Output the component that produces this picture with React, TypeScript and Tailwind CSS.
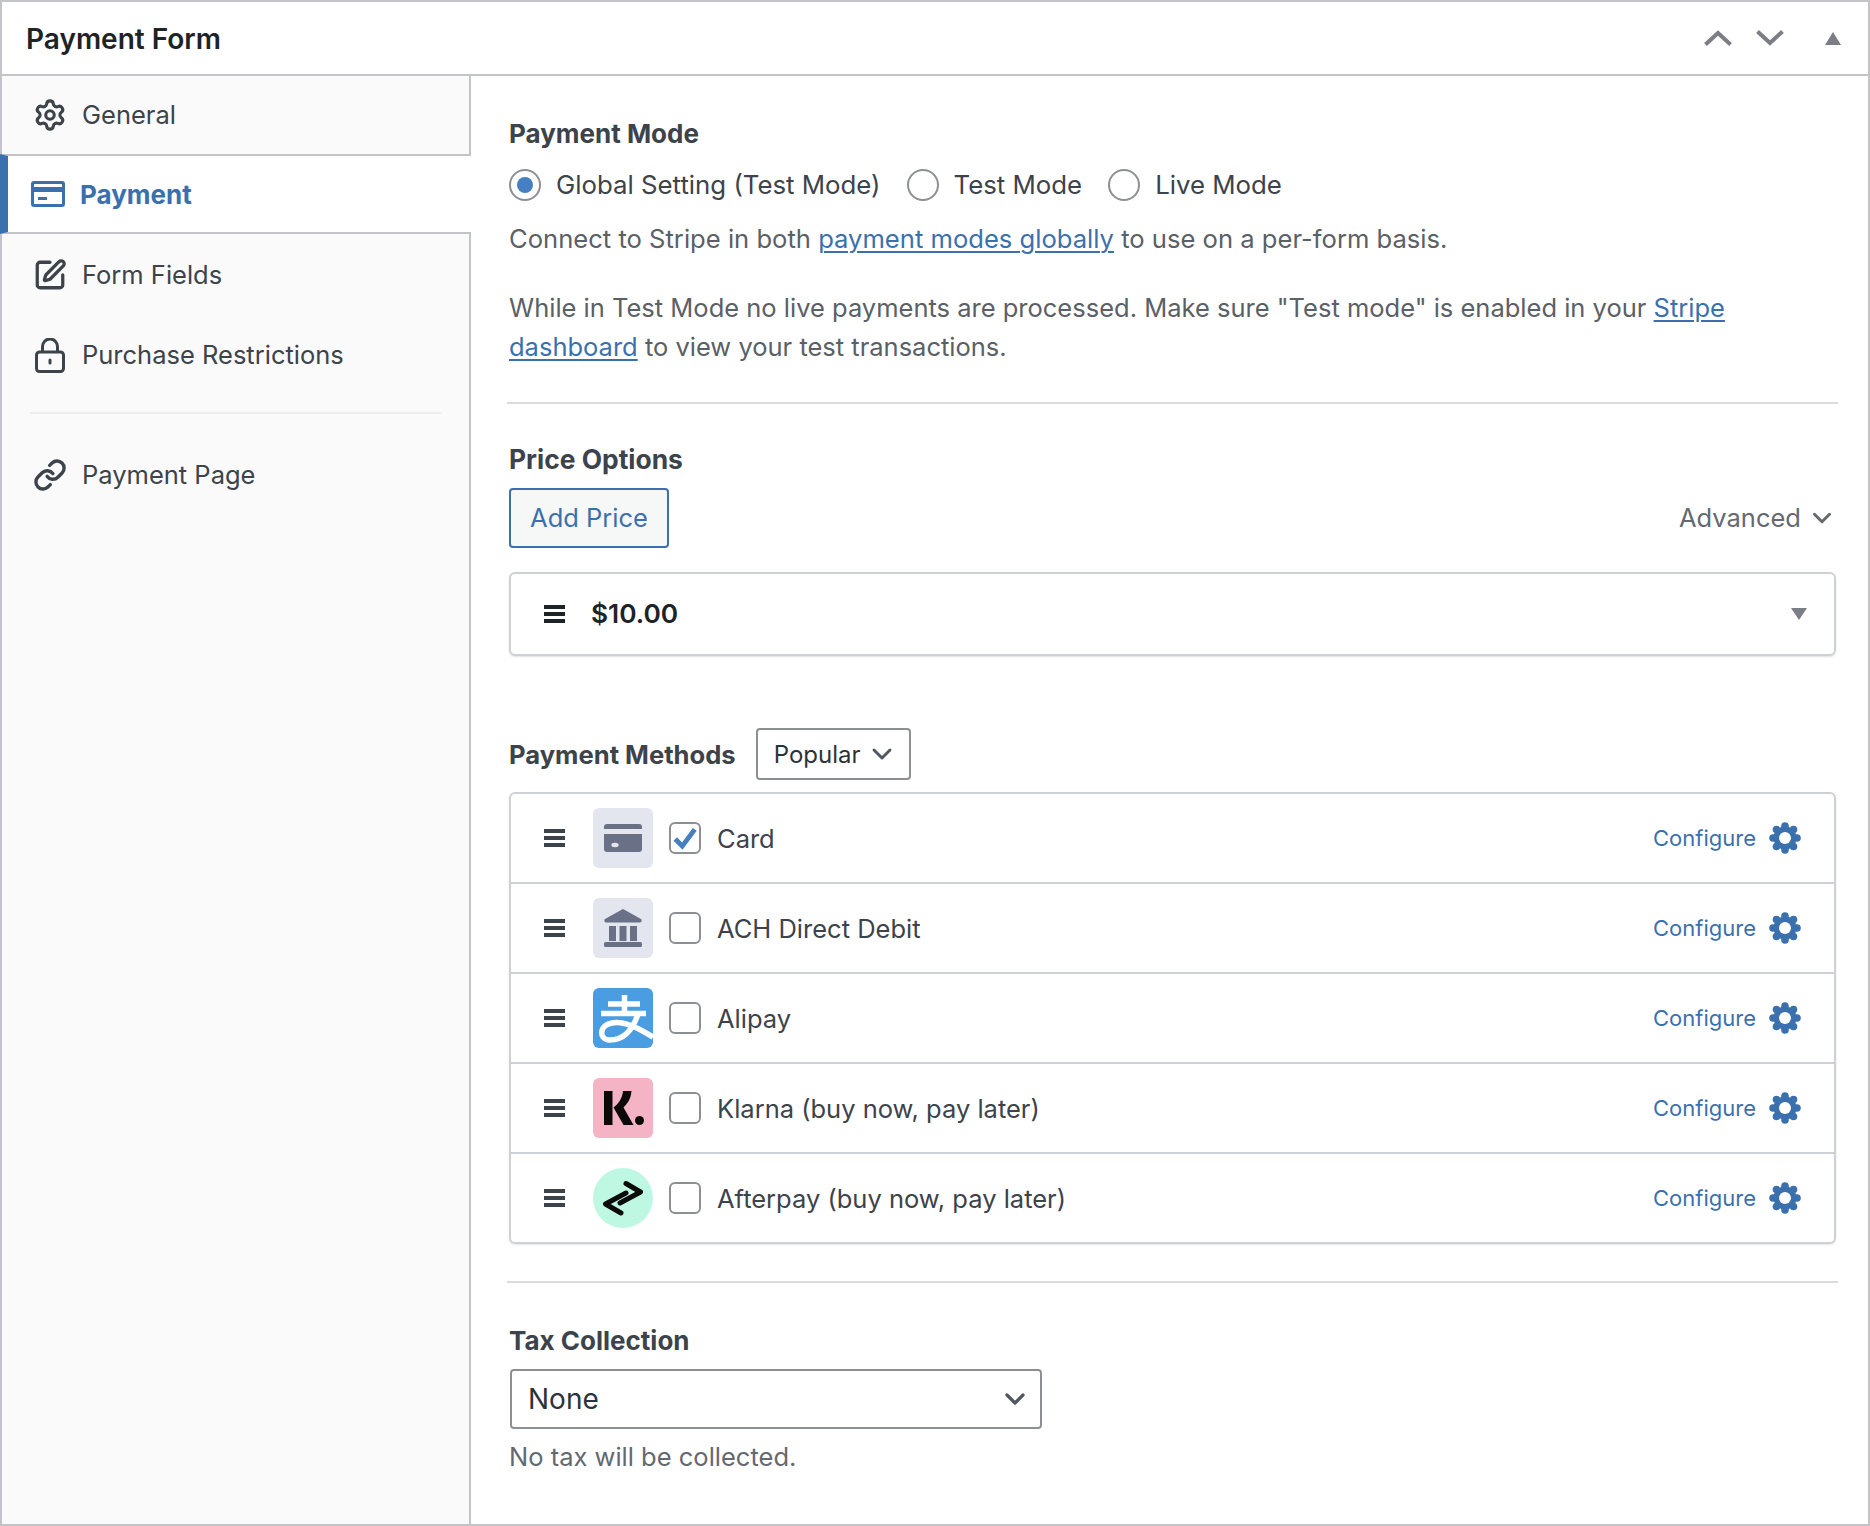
import React from 'react'
import { ChevronDown, Link, Settings, SquarePen } from 'lucide-react'

const FONT = "font-['Inter',sans-serif]"

const GripIcon = ({ className }: { className: string }) => (
  <div className={`flex w-[21px] shrink-0 flex-col gap-[3px] ${className}`}>
    <span className="h-[4px] w-full bg-current" />
    <span className="h-[4px] w-full bg-current" />
    <span className="h-[4px] w-full bg-current" />
  </div>
)

const GearFilled = () => (
  <svg viewBox="0 0 32 32" className="h-[32px] w-[32px]">
    <g fill="#3b70ae">
      <circle cx="16" cy="16" r="11.500" />
      <circle cx="16" cy="4" r="3.800" />
      <circle cx="16" cy="28" r="3.800" />
      <circle cx="4" cy="16" r="3.800" />
      <circle cx="28" cy="16" r="3.800" />
      <circle cx="7.500" cy="7.500" r="3.800" />
      <circle cx="24.500" cy="7.500" r="3.800" />
      <circle cx="7.500" cy="24.500" r="3.800" />
      <circle cx="24.500" cy="24.500" r="3.800" />
    </g>
    <circle cx="16" cy="16" r="6" fill="#fff" />
  </svg>
)

const CardLogo = () => (
  <div className="flex h-[60px] w-[60px] items-center justify-center rounded-[6px] bg-[#e3e6ee]">
    <svg viewBox="0 0 38 28" className="h-[28px] w-[38px]" fill="#6a7187">
      <path d="M0 3a3 3 0 0 1 3-3h32a3 3 0 0 1 3 3v2H0z" />
      <path d="M0 10h38v15a3 3 0 0 1-3 3H3a3 3 0 0 1-3-3z" />
      <ellipse cx="11" cy="21" rx="3.600" ry="2.200" fill="#e3e6ee" />
    </svg>
  </div>
)

const BankLogo = () => (
  <div className="flex h-[60px] w-[60px] items-center justify-center rounded-[6px] bg-[#e3e6ee]">
    <svg viewBox="0 0 38 38" className="h-[38px] w-[38px]" fill="#6a7187">
      <path d="M19 0 37 10c1 .6 1 3.500-1 3.500H2c-2 0-2-2.900-1-3.500z" />
      <rect x="5" y="17" width="7" height="15" />
      <rect x="15.500" y="17" width="7" height="15" />
      <rect x="26" y="17" width="7" height="15" />
      <rect x="0" y="33" width="38" height="5" rx="1.500" />
    </svg>
  </div>
)

const AlipayLogo = () => (
  <svg viewBox="0 0 60 60" className="h-[60px] w-[60px]">
    <rect width="60" height="60" rx="6" fill="#4a9de0" />
    <g stroke="#fff" strokeWidth="5.500" fill="none">
      <path d="M15 16H47" />
      <path d="M31.500 7V25" />
      <path d="M8 25.500H53" />
    </g>
    <path
      d="M45 26C41 38 33 52 17 52C10 52 8 47 9 43C10 37 18 34 25 34.500C36 35 48 42 60 49"
      stroke="#fff"
      strokeWidth="5.500"
      fill="none"
    />
  </svg>
)

const KlarnaLogo = () => (
  <svg viewBox="0 0 60 60" className="h-[60px] w-[60px]">
    <rect width="60" height="60" rx="6" fill="#f4b4c6" />
    <rect x="11" y="13" width="8.500" height="34" fill="#0c0a08" />
    <path d="M30 13h8.500c-.5 8-4.500 13-8 16.500L40.500 47H30.500L20.500 29.500C25.500 26 29.500 20 30 13z" fill="#0c0a08" />
    <circle cx="46.500" cy="42.500" r="4.500" fill="#0c0a08" />
  </svg>
)

const AfterpayLogo = () => (
  <svg viewBox="0 0 60 60" className="h-[60px] w-[60px]">
    <circle cx="30" cy="30" r="30" fill="#bff8e2" />
    <path
      d="M33 15.500 47.500 24 27 35M33 25 12.500 36 28 45"
      stroke="#0b0b0b"
      strokeWidth="5"
      strokeLinecap="round"
      strokeLinejoin="round"
      fill="none"
    />
  </svg>
)

const CardNavIcon = () => (
  <svg viewBox="0 0 34 26" className="h-[26px] w-[34px]" fill="#3b70ae">
    <path
      fillRule="evenodd"
      d="M3 0h28a3 3 0 0 1 3 3v20a3 3 0 0 1-3 3H3a3 3 0 0 1-3-3V3a3 3 0 0 1 3-3zm0 3v3h28V3zm0 8v12h28V11z"
    />
    <rect x="7" y="16" width="9" height="3" />
  </svg>
)

const LockIcon = () => (
  <svg viewBox="0 0 30 35" className="h-[35px] w-[30px]" fill="none" stroke="#3c434a" strokeWidth="3">
    <rect x="1.500" y="14" width="27" height="19.500" rx="3" />
    <path d="M7.500 14V8.500a7.500 7.500 0 0 1 15 0V14" />
    <path d="M15 22v3" strokeLinecap="round" />
  </svg>
)

const SideItem = ({ icon, label, height = 'h-[80px]' }: { icon: React.ReactNode; label: string; height?: string }) => (
  <div className={`flex items-center pl-[31px] text-[25.5px] leading-none text-[#3c434a] ${height}`}>
    <span className="flex w-[34px] justify-center">{icon}</span>
    <span className="ml-[15px]">{label}</span>
  </div>
)

const Radio = ({ label, checked }: { label: string; checked?: boolean }) => (
  <label className="flex items-center">
    <span className="flex h-[32px] w-[32px] items-center justify-center rounded-full border-2 border-[#8c8f94] bg-white">
      {checked && <span className="h-[16px] w-[16px] rounded-full bg-[#4680c2]" />}
    </span>
    <span className="ml-[15px] text-[25.8px] text-[#3c434a]">{label}</span>
  </label>
)

const methods = [
  { name: 'Card', logo: <CardLogo />, checked: true },
  { name: 'ACH Direct Debit', logo: <BankLogo /> },
  { name: 'Alipay', logo: <AlipayLogo /> },
  { name: 'Klarna (buy now, pay later)', logo: <KlarnaLogo /> },
  { name: 'Afterpay (buy now, pay later)', logo: <AfterpayLogo /> },
]

const MethodRow = ({ name, logo, checked, last }: { name: string; logo: React.ReactNode; checked?: boolean; last: boolean }) => (
  <div className={`flex items-center pl-[33px] pr-[33px] ${last ? 'h-[88px]' : 'h-[90px] border-b-2 border-[#cdd0d4]'}`}>
    <GripIcon className="text-[#3c434a]" />
    <div className="ml-[28px]">{logo}</div>
    <span className="ml-[16px] flex h-[32px] w-[32px] items-center justify-center rounded-[6px] border-2 border-[#8c8f94] bg-white">
      {checked && (
        <svg viewBox="0 0 24 24" className="h-[26px] w-[26px]" fill="none" stroke="#4680c2" strokeWidth="4.500">
          <path d="M3 13l6.500 6.500L21 4" />
        </svg>
      )}
    </span>
    <span className="ml-[16px] mt-[2px] text-[25.5px] leading-none text-[#3c434a]">{name}</span>
    <a className="ml-auto text-[22px] leading-none text-[#3b70ae]">Configure</a>
    <span className="ml-[13px]">
      <GearFilled />
    </span>
  </div>
)

export default function App() {
  return (
    <div className={`flex h-[1526px] w-[1870px] flex-col border-2 border-[#c3c4c7] bg-white ${FONT}`}>
      <div className="flex h-[74px] shrink-0 items-center border-b-2 border-[#c3c4c7] pl-[24px] pr-[27px]">
        <h2 className="mt-[2px] text-[28px] font-semibold leading-none text-[#1d2327]">Payment Form</h2>
        <div className="ml-auto flex items-center text-[#7c7e85]">
          <svg viewBox="0 0 28 16" className="h-[16px] w-[28px]" fill="none" stroke="currentColor" strokeWidth="4">
            <path d="M1.500 14.500 14 3l12.500 11.500" />
          </svg>
          <svg viewBox="0 0 28 16" className="ml-[24px] h-[16px] w-[28px]" fill="none" stroke="currentColor" strokeWidth="4">
            <path d="M1.500 1.500 14 13 26.500 1.500" />
          </svg>
          <span className="ml-[41px] h-0 w-0 border-x-[8px] border-b-[13px] border-x-transparent border-b-[#7c7e85]" />
        </div>
      </div>

      <div className="flex min-h-0 flex-1">
        <aside className="w-[469px] shrink-0 border-r-2 border-[#c3c4c7] bg-[#fafafa]">
          <SideItem height="h-[78px]" icon={<Settings size={38} strokeWidth={2.200} color="#3c434a" />} label="General" />
          <div className="relative -mr-[2px] -ml-[2px] flex h-[80px] items-center border-y-2 border-l-[8px] border-y-[#c3c4c7] border-l-[#3b70ae] bg-white pl-[23px] text-[26px] font-bold leading-none text-[#3b70ae]">
            <CardNavIcon />
            <span className="ml-[15px] mt-[2px]">Payment</span>
          </div>
          <div className="mt-[1px]">
            <SideItem icon={<SquarePen size={38} strokeWidth={2.300} color="#3c434a" />} label="Form Fields" />
          </div>
          <SideItem icon={<LockIcon />} label="Purchase Restrictions" />
          <div className="mx-[28px] mt-[17px] h-[2px] bg-[#eeeeee]" />
          <div className="mt-[21px]">
            <SideItem icon={<Link size={38} strokeWidth={2.400} color="#3c434a" />} label="Payment Page" />
          </div>
        </aside>

        <main className="min-w-0 flex-1 pl-[36px] pr-[30px] text-[25.5px] leading-none">
          <section className="pl-[2px] pr-[1px]">
            <h3 className="mt-[45px] text-[26px] font-bold text-[#3c434a]">Payment Mode</h3>
            <div className="mt-[22px] flex gap-[26px]">
              <Radio label="Global Setting (Test Mode)" checked />
              <Radio label="Test Mode" />
              <Radio label="Live Mode" />
            </div>
            <p className="mt-[25px] text-[25.6px] text-[#5a6066]">
              Connect to Stripe in both{' '}
              <a className="text-[#3b70ae] underline decoration-2 underline-offset-[3px]">payment modes globally</a> to use on a per-form basis.
            </p>
            <p className="mt-[36px] leading-[39px] text-[#5a6066]">
              While in Test Mode no live payments are processed. Make sure "Test mode" is enabled in your{' '}
              <a className="text-[#3b70ae] underline decoration-2 underline-offset-[3px]">Stripe</a>
              <br />
              <a className="text-[#3b70ae] underline decoration-2 underline-offset-[3px]">dashboard</a> to view your test transactions.
            </p>
          </section>
          <hr className="mt-[36px] h-[2px] border-0 bg-[#dcdcde]" />

          <section className="pl-[2px] pr-[2px]">
            <h3 className="mt-[42px] text-[26.4px] font-bold text-[#3c434a]">Price Options</h3>
            <div className="mt-[16px] flex items-center justify-between">
              <button className="flex h-[60px] w-[160px] items-center justify-center rounded-[4px] border-2 border-[#3b70ae] bg-[#f6f7f7] text-[#3b70ae]">
                Add Price
              </button>
              <div className="flex items-center text-[#646970]">
                Advanced
                <ChevronDown size={30} strokeWidth={2.400} className="ml-[6px] mr-[-1px]" />
              </div>
            </div>
            <div className="mt-[24px] flex h-[84px] items-center rounded-[6px] border-2 border-[#cdd0d4] pl-[33px] pr-[27px] shadow-[0_1px_2px_rgba(0,0,0,0.12)]">
              <GripIcon className="text-[#1d2327]" />
              <span className="ml-[26px] mt-[1px] text-[26.3px] font-semibold text-[#1d2327]">$10.00</span>
              <span className="ml-auto h-0 w-0 border-x-[8px] border-t-[12px] border-x-transparent border-t-[#7c7e85]" />
            </div>

            <div className="mt-[72px] flex items-center">
              <h3 className="mt-[2px] text-[25.6px] font-bold text-[#3c434a]">Payment Methods</h3>
              <div className="ml-[20px] flex h-[52px] w-[155px] items-center rounded-[4px] border-2 border-[#8c8f94] pl-[16px] text-[24px] text-[#2c3338]">
                <span className="mt-[2px]">Popular</span>
                <ChevronDown size={32} strokeWidth={2.200} className="ml-[5px] text-[#50575e]" />
              </div>
            </div>
            <div className="mt-[12px] rounded-[6px] border-2 border-[#cdd0d4] shadow-[0_1px_2px_rgba(0,0,0,0.1)]">
              {methods.map((m, i) => (
                <MethodRow key={m.name} name={m.name} logo={m.logo} checked={m.checked} last={i === methods.length - 1} />
              ))}
            </div>
          </section>
          <hr className="mt-[37px] h-[2px] border-0 bg-[#dcdcde]" />

          <section className="pl-[2px]">
            <h3 className="mt-[45px] text-[26px] font-bold text-[#3c434a]">Tax Collection</h3>
            <div className="ml-[1px] mt-[15px] flex h-[60px] w-[532px] items-center rounded-[4px] border-2 border-[#8c8f94] pl-[16px] pr-[9px] text-[28px] text-[#2c3338]">
              None
              <ChevronDown size={32} strokeWidth={2.400} className="ml-auto text-[#50575e]" />
            </div>
            <p className="mt-[15px] text-[#646970]">No tax will be collected.</p>
          </section>
        </main>
      </div>
    </div>
  )
}
